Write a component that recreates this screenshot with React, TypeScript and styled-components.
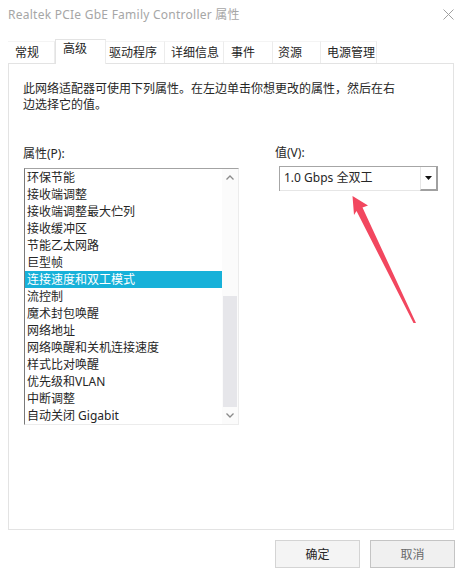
import React from 'react';
import styled, {createGlobalStyle} from 'styled-components';

const GlobalStyle = createGlobalStyle`
  html, body {
    margin: 0;
    padding: 0;
    background: #ffffff;
  }
  body {
    font-family: "Noto Sans", "Noto Sans CJK SC", sans-serif;
    font-size: 12px;
    color: #262626;
  }
`;

const Window = styled.div`
  position: relative;
  width: 463px;
  height: 568px;
  overflow: hidden;
  background: #ffffff;
  display: flex;
  flex-direction: column;
`;

const TitleBar = styled.div`
  height: 30px;
  display: flex;
  align-items: center;
  justify-content: space-between;
  padding: 0 9px 0 8px;
  color: #a6a6a6;
  font-size: 12px;
  line-height: 16px;
  letter-spacing: 0.25px;
`;

const TabStrip = styled.div`
  display: flex;
  align-items: flex-end;
  height: 24px;
  margin: 9px 0 0 8px;
`;

const Tab = styled.div<{$w: number; $pad?: number; $active?: boolean}>`
  box-sizing: border-box;
  width: ${p => p.$w}px;
  height: ${p => (p.$active ? 25 : 22)}px;
  padding-top: ${p => (p.$active ? 1 : 3)}px;
  padding-left: ${p => p.$pad ?? 7}px;
  line-height: 16px;
  white-space: nowrap;
  background: #ffffff;
  border-right: 1px solid #ececec;
  border-top: 1px solid ${p => (p.$active ? '#e3e3e3' : '#f4f4f4')};
  ${p => (p.$active ? 'border-left: 1px solid #e3e3e3; margin-bottom: -1px; position: relative; z-index: 1;' : '')}
`;

const Panel = styled.div`
  box-sizing: border-box;
  height: 468px;
  margin: 0 9px 0 8px;
  border: 1px solid #e3e3e3;
  padding: 17px 14px 0 14px;
  display: flex;
  flex-direction: column;
`;

const Description = styled.p`
  margin: 0;
  line-height: 16px;
  width: 380px;
`;

const Columns = styled.div`
  display: flex;
  margin-top: 33px;
`;

const LeftColumn = styled.div`
  width: 252px;
  display: flex;
  flex-direction: column;
`;

const RightColumn = styled.div`
  flex: 1;
  display: flex;
  flex-direction: column;
`;

const FieldLabel = styled.div<{$lift?: number}>`
  line-height: 16px;
  margin-top: ${p => -(p.$lift || 0)}px;
`;

const ListBox = styled.div`
  box-sizing: border-box;
  width: 215px;
  height: 257px;
  margin: 6px 0 0 1px;
  display: flex;
  border-top: 1px solid #a3a3a3;
  border-left: 1px solid #7a7a7a;
  border-right: 1px solid #ececec;
  border-bottom: 1px solid #ececec;
`;

const Items = styled.ul`
  list-style: none;
  margin: 0;
  padding: 0;
  flex: 1;
`;

const Item = styled.li<{$selected?: boolean}>`
  height: 17px;
  line-height: 17px;
  padding-left: 2px;
  white-space: nowrap;
  background: ${p => (p.$selected ? '#17b1d9' : 'transparent')};
  color: ${p => (p.$selected ? '#ffffff' : '#262626')};
`;

const ScrollBar = styled.div`
  width: 16px;
  display: flex;
  flex-direction: column;
  background: #fbfbfb;
`;

const ScrollArrow = styled.div`
  height: 17px;
  display: flex;
  align-items: center;
  justify-content: center;
`;

const ScrollTrack = styled.div`
  flex: 1;
  display: flex;
  flex-direction: column;
  justify-content: flex-end;
  padding: 0 1px;
`;

const ScrollThumb = styled.div`
  height: 111px;
  background: #e6e6ea;
`;

const Combo = styled.div`
  box-sizing: border-box;
  width: 159px;
  height: 25px;
  margin: 5px 0 0 4px;
  display: flex;
  border-top: 1px solid #a6a6a6;
  border-left: 1px solid #a6a6a6;
`;

const ComboText = styled.div`
  flex: 1;
  padding-left: 4px;
  line-height: 21px;
  border-bottom: 1px solid #e6e6e6;
`;

const ComboButton = styled.div`
  width: 15px;
  display: flex;
  align-items: center;
  justify-content: center;
  border-left: 1px solid #e6e6e6;
  border-right: 2px solid #a0a0a0;
  border-bottom: 2px solid #a0a0a0;
`;

const Footer = styled.div`
  display: flex;
  justify-content: flex-end;
  gap: 10px;
  margin: 10px 8px 0 0;
`;

const Button = styled.button<{$muted?: boolean}>`
  box-sizing: border-box;
  width: 85px;
  height: 28px;
  padding: 0;
  font-family: inherit;
  font-size: 12px;
  background: ${p => (p.$muted ? '#f0f0f0' : '#f4f4f4')};
  border: 1px solid ${p => (p.$muted ? '#c4c4c4' : '#d4d4d4')};
  color: ${p => (p.$muted ? '#6a6a6a' : '#262626')};
`;

const Annotation = styled.svg`
  position: absolute;
  left: 0;
  top: 0;
  pointer-events: none;
`;

const tabs = [
  {label: '常规', w: 47},
  {label: '高级', w: 51, active: true},
  {label: '驱动程序', w: 59, pad: 3},
  {label: '详细信息', w: 59, pad: 6},
  {label: '事件', w: 49},
  {label: '资源', w: 48, pad: 5},
  {label: '电源管理', w: 56, pad: 6},
];

const properties = [
  '环保节能',
  '接收端调整',
  '接收端调整最大伫列',
  '接收缓冲区',
  '节能乙太网路',
  '巨型帧',
  '连接速度和双工模式',
  '流控制',
  '魔术封包唤醒',
  '网络地址',
  '网络唤醒和关机连接速度',
  '样式比对唤醒',
  '优先级和VLAN',
  '中断调整',
  '自动关闭 Gigabit',
];

const Chevron = ({up}: {up?: boolean}) => (
  <svg width="8" height="5" viewBox="0 0 8 5">
    <path d={up ? 'M0.5 4.5 L4 1 L7.5 4.5' : 'M0.5 0.5 L4 4 L7.5 0.5'} fill="none" stroke="#8a8a8a" strokeWidth="1.3" />
  </svg>
);

export default function App() {
  return (
    <Window>
      <GlobalStyle />
      <TitleBar>
        <span>Realtek PCIe GbE Family Controller 属性</span>
        <svg width="11" height="11" viewBox="0 0 11 11">
          <path d="M0.5 0.5 L10.5 10.5 M10.5 0.5 L0.5 10.5" stroke="#a0a0a0" strokeWidth="1" />
        </svg>
      </TitleBar>
      <TabStrip>
        {tabs.map(t => (
          <Tab key={t.label} $w={t.w} $pad={t.pad} $active={t.active}>{t.label}</Tab>
        ))}
      </TabStrip>
      <Panel>
        <Description>此网络适配器可使用下列属性。在左边单击你想更改的属性，然后在右边选择它的值。</Description>
        <Columns>
          <LeftColumn>
            <FieldLabel>属性(P):</FieldLabel>
            <ListBox>
              <Items>
                {properties.map(p => (
                  <Item key={p} $selected={p === '连接速度和双工模式'}>{p}</Item>
                ))}
              </Items>
              <ScrollBar>
                <ScrollArrow><Chevron up /></ScrollArrow>
                <ScrollTrack><ScrollThumb /></ScrollTrack>
                <ScrollArrow><Chevron /></ScrollArrow>
              </ScrollBar>
            </ListBox>
          </LeftColumn>
          <RightColumn>
            <FieldLabel $lift={1}>值(V):</FieldLabel>
            <Combo>
              <ComboText>1.0 Gbps 全双工</ComboText>
              <ComboButton>
                <svg width="7" height="4" viewBox="0 0 7 4">
                  <path d="M0 0 H7 L3.5 4 Z" fill="#111" />
                </svg>
              </ComboButton>
            </Combo>
          </RightColumn>
        </Columns>
      </Panel>
      <Footer>
        <Button>确定</Button>
        <Button $muted>取消</Button>
      </Footer>
      <Annotation width="463" height="568" viewBox="0 0 463 568">
        <path d="M352.5 196 L368 205.5 L362.5 207.5 L416 323 L413.5 323 L356.5 211 L354 215 Z" fill="#f2475f" />
      </Annotation>
    </Window>
  );
}
